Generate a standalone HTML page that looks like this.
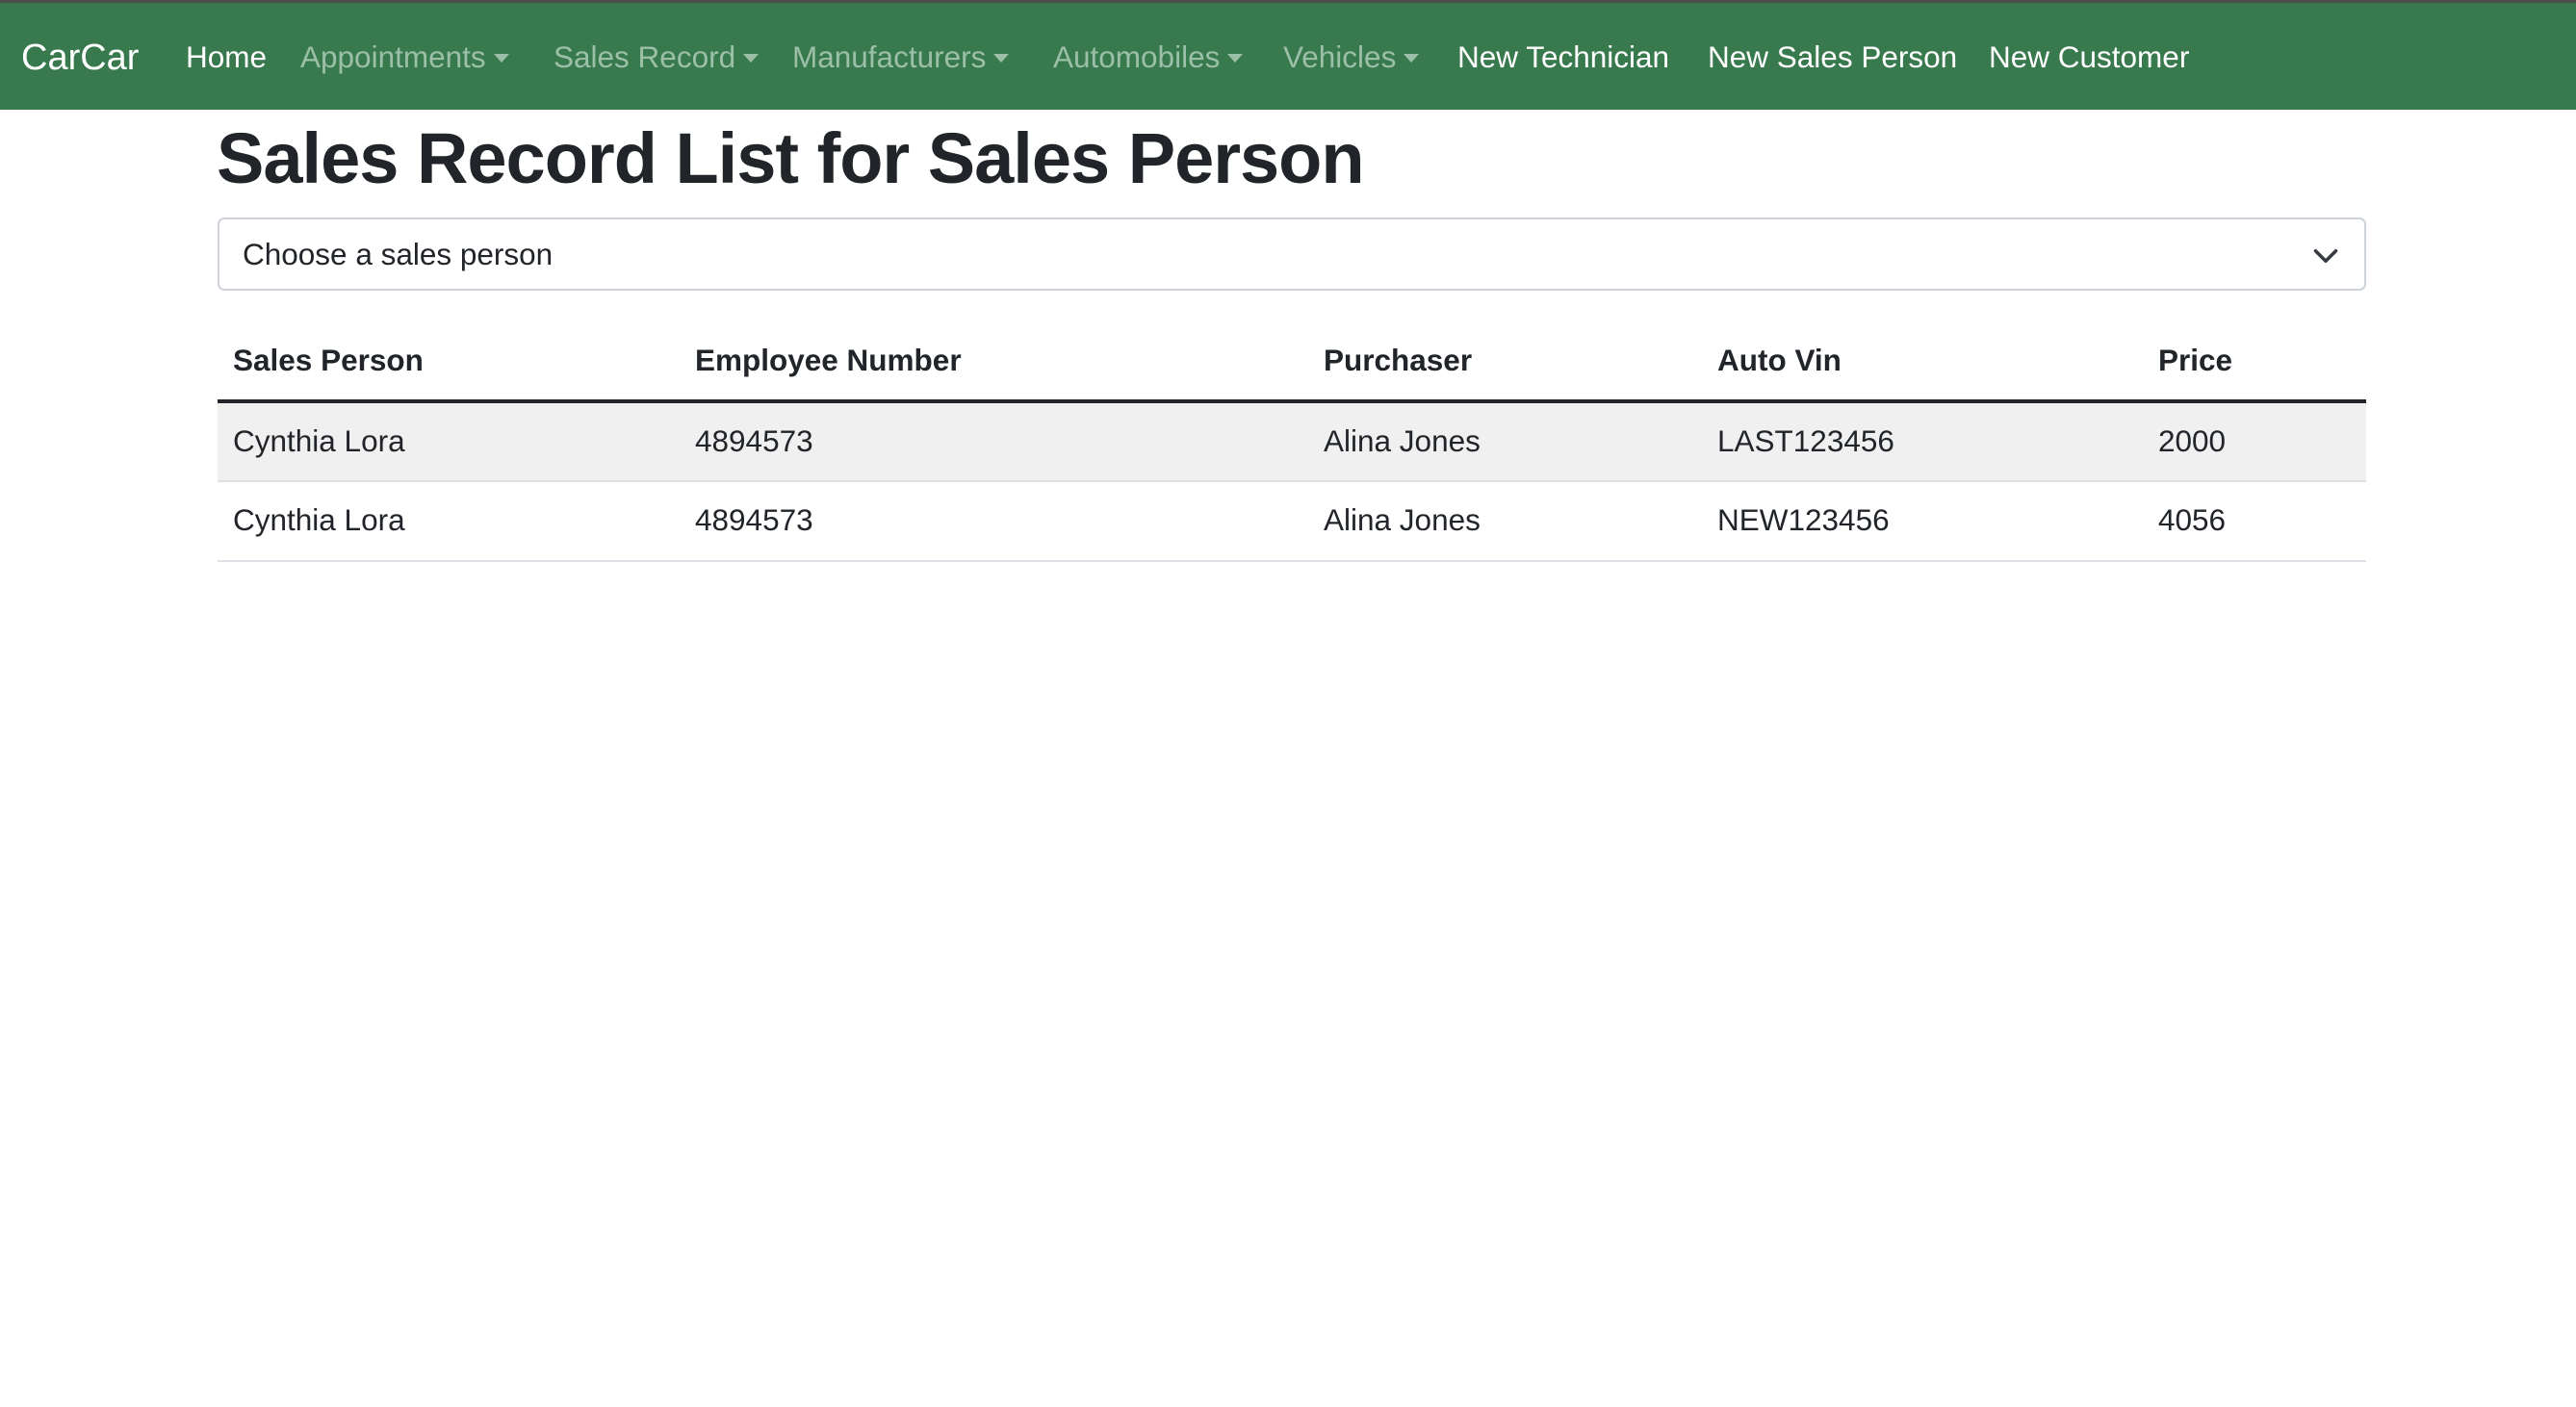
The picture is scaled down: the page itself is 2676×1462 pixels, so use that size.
<!DOCTYPE html>
<html><head><meta charset="utf-8"><style>
*{margin:0;padding:0;box-sizing:border-box}
html,body{width:2676px;height:1462px;background:#fff;overflow:hidden;font-family:"Liberation Sans",Arial,sans-serif;color:#212529}
.nav{position:absolute;left:0;top:0;width:2676px;height:114px;background:#387a4e;border-top:3px solid #4d4d4d}
.nav span{position:absolute;top:38px;font-size:31.5px;line-height:36px;color:#fff;white-space:nowrap}
.nav .dim{color:#9cbfa7}
.nav .brand{font-size:38px;top:35px;line-height:44px}
.caret{display:inline-block;width:0;height:0;border-left:8px solid transparent;border-right:8px solid transparent;border-top:9px solid #9cbfa7;vertical-align:5px;margin-left:8px}
h1{position:absolute;left:225px;top:120px;font-size:74px;font-weight:bold;line-height:90px;letter-spacing:-1px;white-space:nowrap}
.sel{position:absolute;left:226px;top:226px;width:2232px;height:76px;border:2px solid #ced4da;border-radius:7px}
.sel span{position:absolute;left:24px;top:18px;font-size:31.5px;line-height:36px}
.sel svg{position:absolute;right:26px;top:24px}
.t{position:absolute;left:226px;width:2232px}
.t span{position:absolute;font-size:31.5px;line-height:36px;white-space:nowrap}
.hd span{font-weight:bold}
</style></head><body>
<div class="nav">
<span class="brand" style="left:22px">CarCar</span>
<span style="left:193px">Home</span>
<span class="dim" style="left:312px">Appointments<i class="caret"></i></span>
<span class="dim" style="left:575px">Sales Record<i class="caret"></i></span>
<span class="dim" style="left:823px">Manufacturers<i class="caret"></i></span>
<span class="dim" style="left:1094px">Automobiles<i class="caret"></i></span>
<span class="dim" style="left:1333px">Vehicles<i class="caret"></i></span>
<span style="left:1514px">New Technician</span>
<span style="left:1774px">New Sales Person</span>
<span style="left:2066px">New Customer</span>
</div>
<h1>Sales Record List for Sales Person</h1>
<div class="sel"><span>Choose a sales person</span>
<svg width="28" height="28" viewBox="0 0 16 16"><path d="M2 5l6 6 6-6" fill="none" stroke="#343a40" stroke-width="2" stroke-linecap="round" stroke-linejoin="round"/></svg></div>
<div class="t hd" style="top:356px;height:60px">
<span style="left:16px">Sales Person</span><span style="left:496px">Employee Number</span><span style="left:1149px">Purchaser</span><span style="left:1558px">Auto Vin</span><span style="left:2016px">Price</span>
</div>
<div class="t" style="top:415px;height:4px;background:#212529"></div>
<div class="t" style="top:419px;height:80px;background:#f0f0f0">
<span style="left:16px;top:21px">Cynthia Lora</span><span style="left:496px;top:21px">4894573</span><span style="left:1149px;top:21px">Alina Jones</span><span style="left:1558px;top:21px">LAST123456</span><span style="left:2016px;top:21px">2000</span>
</div>
<div class="t" style="top:499px;height:2px;background:#dee2e6"></div>
<div class="t" style="top:501px;height:81px">
<span style="left:16px;top:21px">Cynthia Lora</span><span style="left:496px;top:21px">4894573</span><span style="left:1149px;top:21px">Alina Jones</span><span style="left:1558px;top:21px">NEW123456</span><span style="left:2016px;top:21px">4056</span>
</div>
<div class="t" style="top:582px;height:2px;background:#dee2e6"></div>
</body></html>
